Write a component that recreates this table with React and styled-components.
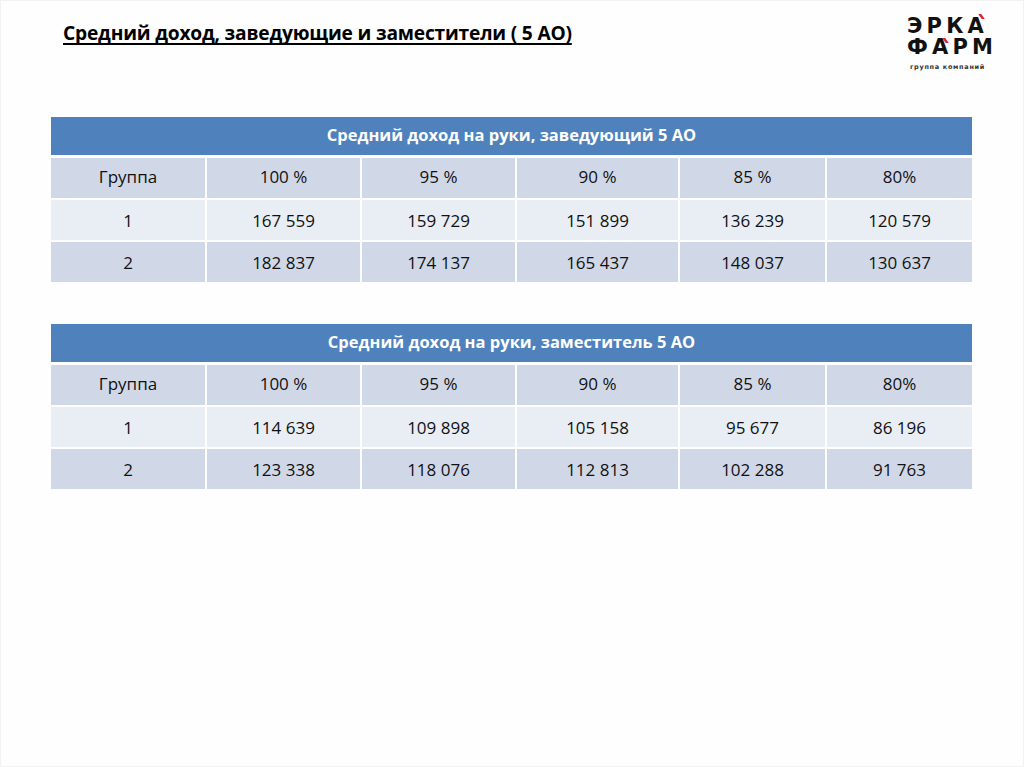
import React from "react";
import styled, { createGlobalStyle } from "styled-components";

const GlobalStyle = createGlobalStyle`
  html, body {
    margin: 0;
    padding: 0;
    background: #ffffff;
  }
  body {
    font-family: "Open Sans", "Liberation Sans", sans-serif;
  }
`;

const Slide = styled.div`
  width: 1024px;
  height: 767px;
  box-sizing: border-box;
  border: 1px solid #f2f2f2;
  background: #fefefe;
  padding: 0 51px 0 50px;
  overflow: hidden;
`;

const TopBar = styled.div`
  display: flex;
  justify-content: space-between;
  align-items: flex-start;
  height: 116px;
`;

const Title = styled.h1`
  margin: 18px 0 0 12px;
  font-family: "Open Sans", "Liberation Sans", sans-serif;
  font-size: 19.2px;
  font-weight: 700;
  color: #000;
  text-decoration: underline;
  text-decoration-thickness: 1.5px;
  text-decoration-skip-ink: none;
  text-underline-offset: 3px;
  letter-spacing: -0.2px;
`;

const Logo = styled.div`
  margin: 15px -27px 0 0;
  width: 92px;
  display: flex;
  flex-direction: column;
  align-items: flex-start;
`;

const LogoWord = styled.div`
  position: relative;
  font-family: "DejaVu Sans", "Liberation Sans", sans-serif;
  font-weight: 700;
  font-size: 21px;
  line-height: 21px;
  letter-spacing: 4.2px;
  color: #111;
`;

const Accent = styled.span`
  position: absolute;
  top: ${p => p.$top}px;
  left: ${p => p.$left}px;
  width: 3px;
  height: 5px;
  background: #d9232e;
  transform: skewX(35deg);
`;

const LogoSub = styled.div`
  margin-top: 5px;
  margin-left: 3px;
  font-family: "DejaVu Sans", "Liberation Sans", sans-serif;
  font-weight: 700;
  font-size: 6.5px;
  letter-spacing: 0.7px;
  color: #333;
`;

const Table = styled.div`
  display: grid;
  grid-template-columns: 154px 153px 153px 161px 145px 145px;
  grid-template-rows: 39px 40px 40px 40px;
  column-gap: 2px;
  row-gap: 2px;
  margin-bottom: 42px;
`;

const HeadCell = styled.div`
  grid-column: 1 / -1;
  background: #4f81bd;
  color: #fff;
  font-weight: 700;
  font-size: 16.5px;
  display: flex;
  align-items: center;
  justify-content: center;
  margin-bottom: 1px;
  padding-bottom: 4px;
`;

const Cell = styled.div`
  background: ${p => (p.$light ? "#e9edf4" : "#d0d8e8")};
  color: #111;
  font-size: 17px;
  display: flex;
  align-items: center;
  justify-content: center;
  padding-bottom: ${p => (p.$first ? 4 : 0)}px;
`;

const DataTable = ({ title, rows }) => (
  <Table>
    <HeadCell>{title}</HeadCell>
    {rows.map((row, i) =>
      row.map((v, j) => (
        <Cell key={i + "-" + j} $light={i === 1} $first={i === 0}>
          {v}
        </Cell>
      ))
    )}
  </Table>
);

const heads = ["Группа", "100 %", "95 %", "90 %", "85 %", "80%"];

const managers = [
  heads,
  ["1", "167 559", "159 729", "151 899", "136 239", "120 579"],
  ["2", "182 837", "174 137", "165 437", "148 037", "130 637"],
];

const deputies = [
  heads,
  ["1", "114 639", "109 898", "105 158", "95 677", "86 196"],
  ["2", "123 338", "118 076", "112 813", "102 288", "91 763"],
];

const App = () => (
  <Slide>
    <GlobalStyle />
    <TopBar>
      <Title>Средний доход, заведующие и заместители ( 5 АО)</Title>
      <Logo>
        <LogoWord>
          ЭРКА
          <Accent $top={-2} $left={73} />
        </LogoWord>
        <LogoWord>
          ФАРМ
          <Accent $top={1} $left={37} />
        </LogoWord>
        <LogoSub>группа компаний</LogoSub>
      </Logo>
    </TopBar>
    <DataTable title="Средний доход на руки, заведующий 5 АО" rows={managers} />
    <DataTable title="Средний доход на руки, заместитель 5 АО" rows={deputies} />
  </Slide>
);

export default App;
